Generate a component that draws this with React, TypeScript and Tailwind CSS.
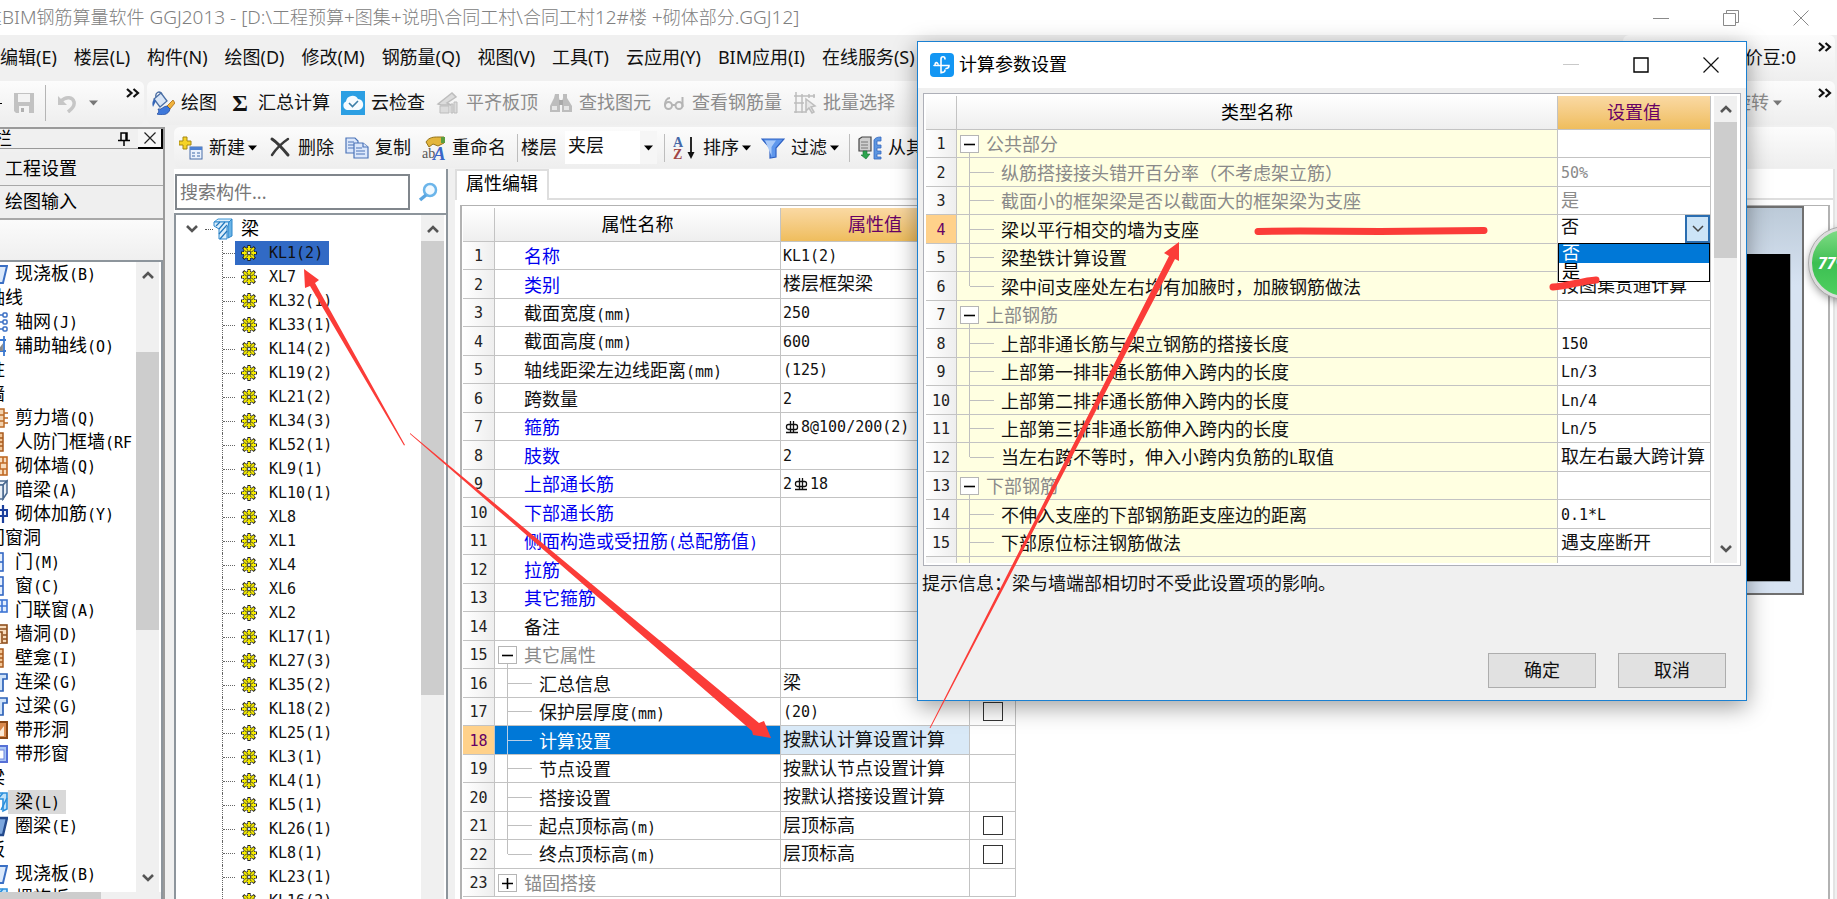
import { Fragment, type ReactNode } from "react";

/* ---------- text helpers ---------- */

const monoLatin = "font-['DejaVu_Sans_Mono',monospace] text-[15px]";

function Mix({ text, latin = monoLatin }: { text: string; latin?: string }) {
  const parts = text.split(/([\x20-\x7e]+)/);
  return (
    <>
      {parts.map((p, i) =>
        i % 2 ? (
          <span key={i} className={latin}>
            {p}
          </span>
        ) : (
          <Fragment key={i}>{p}</Fragment>
        )
      )}
    </>
  );
}

function Rebar() {
  return (
    <svg viewBox="0 0 14 16" className="mx-[2px] inline-block h-4 w-[14px] align-[-3px]" fill="none" stroke="#111" strokeWidth="1.3">
      <rect x="1.5" y="5.5" width="11" height="5" rx="2" />
      <path d="M5.5 2v12M8.5 2v12M1 13.5h12" />
    </svg>
  );
}

/* ---------- small drawings ---------- */

function Caret({ className = "text-black" }: { className?: string }) {
  return (
    <svg viewBox="0 0 9 6" className={`h-[6px] w-[9px] ${className}`} fill="currentColor">
      <path d="M0 0.5h9L4.5 5.5z" />
    </svg>
  );
}

function More() {
  return (
    <svg viewBox="0 0 14 10" className="h-[10px] w-[14px]" fill="none" stroke="#111" strokeWidth="2.2">
      <path d="M1 1l4.5 4L1 9M7.5 1L12 5 7.5 9" />
    </svg>
  );
}

function Arrow({ up = false }: { up?: boolean }) {
  return (
    <svg viewBox="0 0 12 8" className="h-2 w-3" fill="none" stroke="#555" strokeWidth="2.6">
      <path d={up ? "M1 7l5-5 5 5" : "M1 1l5 5 5-5"} />
    </svg>
  );
}

function Gear() {
  return (
    <svg viewBox="0 0 16 16" className="h-4 w-4 shrink-0">
      <path d="M8 0v16M0 8h16M2.200 2.200l11.600 11.600M13.800 2.200L2.200 13.800" stroke="#222" strokeWidth="3.200" />
      <circle cx="8" cy="8" r="6" fill="#222" />
      <path d="M8 1v14M1 8h14M3 3l10 10M13 3L3 13" stroke="#f8ee00" strokeWidth="1.900" />
      <circle cx="8" cy="8" r="5.200" fill="#f8ee00" />
      <path d="M6 4l.6 1.600M10 4l-.6 1.600M6 12l.6-1.600M10 12l-.6-1.600M4 6l1.600.6M4 10l1.600-.6M12 6l-1.600.6M12 10l-1.600-.6" stroke="#333" strokeWidth="0.900" />
      <circle cx="8" cy="8" r="1.900" fill="#d5e0ea" stroke="#222" strokeWidth="1" />
    </svg>
  );
}

function BeamIcon() {
  return (
    <svg viewBox="0 0 20 22" className="h-[22px] w-5 shrink-0">
      <path d="M1 4l4-3h14l-3 3z" fill="#dff0fc" stroke="#3a94d6" />
      <path d="M1 4h15v4l-2 1v12H6V11L1 8z" fill="#dbeefb" stroke="#2d86cb" />
      <path d="M16 4l3-3v17l-4 2V8z" fill="#69b3e6" stroke="#2d86cb" />
      <path d="M3 8l4-4M6 11l6-7M6 16l8-9M7 21l7-8" stroke="#2277bd" strokeWidth="1.200" />
    </svg>
  );
}

type Kind =
  | "slab" | "axis" | "aux" | "brick" | "brickNarrow" | "brickWide" | "box" | "rebar"
  | "door" | "window" | "hole" | "tee" | "strip" | "stripWin" | "beam" | "ring";

function KindIcon({ kind }: { kind: Kind }) {
  const draw: Record<Kind, ReactNode> = {
    slab: <path d="M5 3h16l-4 17H2z" fill="#dbe9fb" stroke="#3a6fc4" strokeWidth="2" />,
    axis: (
      <g fill="#fff" stroke="#3a6fc4" strokeWidth="1.5">
        <path d="M12 1v20M6 4h12M6 11h12M6 18h12" />
        <rect x="17" y="2" width="4" height="4" rx="1" />
        <rect x="17" y="9" width="4" height="4" rx="1" />
        <rect x="17" y="16" width="4" height="4" rx="1" />
      </g>
    ),
    aux: (
      <g fill="none" stroke="#3a78d0" strokeWidth="1.8">
        <path d="M18 1v20M8 5h12M8 16h12" />
        <path d="M13 15l3-4v4z" fill="#999" stroke="#888" />
      </g>
    ),
    brick: (
      <g fill="#f3d2ae" stroke="#bb6a26" strokeWidth="1.5">
        <rect x="4" y="2" width="14" height="18" />
        <path d="M4 8h14M4 14h14M18 6h4M18 11h4M18 16h4" />
      </g>
    ),
    brickNarrow: (
      <g fill="#f3c797" stroke="#a8591c" strokeWidth="1.5">
        <rect x="2" y="2" width="15" height="18" />
        <path d="M2 7h15M2 11h15M2 15h15M13 2v18" />
      </g>
    ),
    brickWide: (
      <g fill="#f8dcbc" stroke="#c06a25" strokeWidth="1.6">
        <rect x="2" y="2" width="19" height="18" />
        <path d="M2 8h19M2 14h19M17 2v6M14 8v6M17 14v6" />
      </g>
    ),
    box: (
      <g fill="#e8eff7" stroke="#48688f" strokeWidth="1.5">
        <path d="M4 6l6-4h11l-4 4z" />
        <path d="M17 6l4-4v12l-4 6z" />
        <path d="M4 6h13v14H4z" />
      </g>
    ),
    rebar: <path d="M17 2v18M8 7h13v6H8" fill="none" stroke="#1b3f9c" strokeWidth="2.2" />,
    door: (
      <g fill="#e6effc" stroke="#3267c4" strokeWidth="1.6">
        <rect x="3" y="2" width="14" height="18" />
        <path d="M13 11h4" />
      </g>
    ),
    window: (
      <g fill="#e2edfd" stroke="#3d74d4" strokeWidth="1.6">
        <rect x="3" y="1" width="18" height="12" />
        <path d="M16 1v12M3 7h18" />
      </g>
    ),
    hole: (
      <g fill="#f8dcbc" stroke="#8f4f1c" strokeWidth="1.6">
        <rect x="2" y="2" width="19" height="18" />
        <path d="M11 20V9h5v11M2 6h19M17 12h4M17 16h4" />
      </g>
    ),
    tee: <path d="M4 3h17v5h-4v12h-7V8H4z" fill="#cfe2f8" stroke="#2d62b8" strokeWidth="1.7" />,
    strip: (
      <g>
        <rect x="2" y="3" width="19" height="16" fill="#d98a4e" stroke="#8a4716" strokeWidth="2" />
        <path d="M10 17l8-10v10z" fill="#fbe9d6" />
      </g>
    ),
    stripWin: (
      <g>
        <rect x="2" y="3" width="19" height="16" fill="#aac6f5" stroke="#5670d6" strokeWidth="2" />
        <rect x="9" y="7" width="9" height="9" fill="#fff" stroke="#6f86e0" />
      </g>
    ),
    beam: (
      <g fill="#bfe2fa" stroke="#2c90dc" strokeWidth="1.6">
        <path d="M4 4l3-2h14v16l-4 2V8H4z" />
        <path d="M12 8l5-6M15 19l6-12" />
      </g>
    ),
    ring: <path d="M4 3h17l-4 17H5z" fill="#7ca6dd" stroke="#23498c" strokeWidth="2.4" />,
  };
  return (
    <svg viewBox="0 0 22 22" className="-ml-[14px] h-[22px] w-[22px] shrink-0">
      {draw[kind]}
    </svg>
  );
}

const toolIcon = "h-6 w-6 shrink-0";

function PaintIcon() {
  return (
    <svg viewBox="0 0 24 24" className={toolIcon}>
      <path d="M3 8l7-6 6 8-7 6z" fill="#d9e6f7" stroke="#4b6fa5" strokeWidth="1.3" />
      <path d="M5 6c-1-4 3-7 6-3" fill="none" stroke="#4b6fa5" strokeWidth="1.4" />
      <path d="M3 8c-2 3-2 5-1 8l3-6z" fill="#3465b8" />
      <path d="M22 9l2 3-5 6-3-3z" fill="#f0b23c" stroke="#a86a14" strokeWidth="0.8" />
      <path d="M7 18c4 1 5-3 9-3l3 3c-1 6-9 7-13 5 2-1 2-3 1-5z" fill="#3e78da" stroke="#274f9e" strokeWidth="0.8" />
    </svg>
  );
}
function CloudIcon() {
  return (
    <svg viewBox="0 0 24 24" className={toolIcon}>
      <rect width="24" height="24" fill="#2c9fe3" />
      <path d="M6 19a4.500 4.500 0 0 1-1-8.500A6.500 6.500 0 0 1 17 8a5.600 5.600 0 0 1 1 11z" fill="#f5fbff" />
      <path d="M8 12l3.500 3.500L17 10" fill="none" stroke="#3d7fa8" strokeWidth="1.600" />
    </svg>
  );
}
function AlignIcon() {
  return (
    <svg viewBox="0 0 24 24" className={toolIcon} stroke="#bdbdbd" fill="#dcdcdc">
      <path d="M2 13L16 2l4 4-9 6 4 2H5z" strokeWidth="1.500" />
      <path d="M4 15h9v7H4z M15 13h2v9h-2z M18 11h3v11h-3z" />
    </svg>
  );
}
function BinocularsIcon() {
  return (
    <svg viewBox="0 0 24 24" className={toolIcon} fill="#bdbdbd">
      <path d="M6 3h4v4l1 3v11H1v-6L5 7zM14 3h4v4l5 8v6H13V10l1-3z" />
      <path d="M10 9h4v5h-4z" fill="#a9a9a9" />
      <path d="M3 15h5v4H3zM15 15h5v4h-5z" fill="#e6e6e6" />
    </svg>
  );
}
function GlassesIcon() {
  return (
    <svg viewBox="0 0 24 24" className={toolIcon} fill="none" stroke="#b5b5b5" strokeWidth="2">
      <circle cx="6.500" cy="14.500" r="3.500" />
      <circle cx="17" cy="14.500" r="3.500" />
      <path d="M3 14c0-4 2-7 5-7M10 14h3.500M20.500 16V6" />
    </svg>
  );
}
function PickIcon() {
  return (
    <svg viewBox="0 0 24 24" className={toolIcon} fill="none" stroke="#bdbdbd" strokeWidth="1.500">
      <path d="M3 1v21M9 3v19M1 5h21M1 12h10M1 21h13M16 3v4M21 3v4" />
      <path d="M13 8l9 7-4 1 3 5-2 1-3-5-3 3z" fill="#e8e8e8" />
    </svg>
  );
}
function NewIcon() {
  return (
    <svg viewBox="0 0 24 24" className={toolIcon}>
      <path d="M4 1h4v4h4v4H8v4H4V9H0V5h4z" fill="#f5d327" stroke="#a58610" />
      <rect x="11" y="11" width="12" height="12" fill="#eaf1fc" stroke="#4b6ea8" />
      <path d="M11 11h12v3H11z" fill="#4f82d2" />
      <path d="M13 17h3M18 17h3M13 20h3M18 20h3" stroke="#7896c4" strokeWidth="1.500" />
    </svg>
  );
}
function DeleteIcon() {
  return (
    <svg viewBox="0 0 24 24" className={toolIcon} stroke="#3a3a3a" fill="none" strokeLinecap="round">
      <path d="M4 3c6 4 11 10 16 16" strokeWidth="3" />
      <path d="M20 3C14 7 8 13 4 19" strokeWidth="2.400" />
    </svg>
  );
}
function CopyIcon() {
  return (
    <svg viewBox="0 0 24 24" className={toolIcon} fill="#dbe7fb" stroke="#4c74b8" strokeWidth="1.200">
      <path d="M1 2h9l3 3v12H1z" />
      <path d="M3 6h6M3 9h6M3 12h6" />
      <path d="M9 7h9l5 4v11H9z" />
      <path d="M18 7v4h5" />
      <path d="M11 12h6M11 15h9M11 18h9" />
    </svg>
  );
}
function RenameIcon() {
  return (
    <svg viewBox="0 0 24 24" className={toolIcon}>
      <path d="M4 6c3-5 8-5 12-5h6v6l-6 3-5-2-4 3z" fill="#e3b53c" stroke="#94731a" />
      <path d="M19 1h4v6h-4z" fill="#5b9e3f" />
      <text x="0" y="22" fontSize="14" fill="#555" fontFamily="Liberation Serif">ab</text>
      <text x="11" y="24" fontSize="19" fontWeight="700" fontStyle="italic" fill="#3a66c8" fontFamily="Liberation Serif">A</text>
    </svg>
  );
}
function SortIcon() {
  return (
    <svg viewBox="0 0 24 24" className={toolIcon}>
      <text x="0" y="11" fontSize="14" fontWeight="700" fill="#4468a8" fontFamily="Liberation Serif">A</text>
      <text x="0" y="23" fontSize="14" fontWeight="700" fill="#a04545" fontFamily="Liberation Serif">Z</text>
      <path d="M18 1v18" stroke="#111" strokeWidth="1.800" />
      <path d="M14.500 16h7l-3.500 7z" fill="#111" />
    </svg>
  );
}
function FilterIcon() {
  return (
    <svg viewBox="0 0 24 24" className={toolIcon}>
      <path d="M1 3h22l-8 9v9l-6 1V12z" fill="#5f97ec" stroke="#2f62c4" strokeWidth="1.200" />
      <path d="M4 4.500h11L10.500 11v9z" fill="#a9caf9" />
    </svg>
  );
}
function ImportIcon() {
  return (
    <svg viewBox="0 0 24 24" className={toolIcon}>
      <path d="M1 3l3-2h9v14H1z" fill="#cfcfcf" stroke="#444" strokeWidth="1.200" />
      <path d="M3 6h7M3 9h7M3 12h7" stroke="#777" />
      <path d="M5 15h4v3h3l-4 5-5-4h2z" fill="#2da44e" stroke="#157034" strokeWidth="0.600" />
      <path d="M16 4c1-2 3-3 7-3v4h-4v4h4v3h-4v3h4v3h-4v3h4v2h-7z" fill="#5d96e0" stroke="#3468c0" strokeWidth="0.800" />
    </svg>
  );
}

/* ---------- toolbar pieces ---------- */

function Tool({ icon, label, muted = false, menu = false }: { icon: ReactNode; label: string; muted?: boolean; menu?: boolean }) {
  return (
    <button type="button" className={`flex shrink-0 items-center gap-[6px] whitespace-nowrap ${muted ? "text-[#8c8c8c]" : "text-[#111]"}`}>
      {icon}
      <span className="flex items-center gap-[3px]">
        {label}
        {menu && <Caret />}
      </span>
    </button>
  );
}

function Sep() {
  return <span className="h-7 w-px shrink-0 bg-[#bdbdbd]" />;
}

const barBg = "bg-linear-to-b from-[#fcfcfc] to-[#eeeeee]";

/* ---------- data ---------- */

const menus = ["编辑(E)", "楼层(L)", "构件(N)", "绘图(D)", "修改(M)", "钢筋量(Q)", "视图(V)", "工具(T)", "云应用(Y)", "BIM应用(I)", "在线服务(S)"];

const navRows: { label: string; kind?: Kind; on?: boolean }[] = [
  { label: "现浇板(B)", kind: "slab" },
  { label: "轴线" },
  { label: "轴网(J)", kind: "axis" },
  { label: "辅助轴线(O)", kind: "aux" },
  { label: "柱" },
  { label: "墙" },
  { label: "剪力墙(Q)", kind: "brick" },
  { label: "人防门框墙(RF", kind: "brickNarrow" },
  { label: "砌体墙(Q)", kind: "brickWide" },
  { label: "暗梁(A)", kind: "box" },
  { label: "砌体加筋(Y)", kind: "rebar" },
  { label: "门窗洞" },
  { label: "门(M)", kind: "door" },
  { label: "窗(C)", kind: "door" },
  { label: "门联窗(A)", kind: "window" },
  { label: "墙洞(D)", kind: "hole" },
  { label: "壁龛(I)", kind: "brickNarrow" },
  { label: "连梁(G)", kind: "tee" },
  { label: "过梁(G)", kind: "tee" },
  { label: "带形洞", kind: "strip" },
  { label: "带形窗", kind: "stripWin" },
  { label: "梁" },
  { label: "梁(L)", kind: "beam", on: true },
  { label: "圈梁(E)", kind: "ring" },
  { label: "板" },
  { label: "现浇板(B)", kind: "slab" },
  { label: "螺旋板(B)", kind: "beam" },
];

const beams = [
  "KL1(2)", "XL7", "KL32(1)", "KL33(1)", "KL14(2)", "KL19(2)", "KL21(2)", "KL34(3)", "KL52(1)", "KL9(1)", "KL10(1)", "XL8", "XL1", "XL4",
  "XL6", "XL2", "KL17(1)", "KL27(3)", "KL35(2)", "KL18(2)", "KL25(1)", "KL3(1)", "KL4(1)", "KL5(1)", "KL26(1)", "KL8(1)", "KL23(1)", "KL16(2)",
];

type Level = "plain" | "open" | "closed" | "child" | "last";
interface Row {
  name: string;
  value?: ReactNode;
  level: Level;
  blue?: boolean;
  grey?: boolean;
  check?: boolean;
  on?: boolean;
}

const t = (s: string) => <Mix text={s} />;

const props: Row[] = [
  { name: "名称", value: t("KL1(2)"), level: "plain", blue: true },
  { name: "类别", value: t("楼层框架梁"), level: "plain", blue: true },
  { name: "截面宽度(mm)", value: t("250"), level: "plain" },
  { name: "截面高度(mm)", value: t("600"), level: "plain" },
  { name: "轴线距梁左边线距离(mm)", value: t("(125)"), level: "plain" },
  { name: "跨数量", value: t("2"), level: "plain" },
  { name: "箍筋", value: <><Rebar />{t("8@100/200(2)")}</>, level: "plain", blue: true },
  { name: "肢数", value: t("2"), level: "plain", blue: true },
  { name: "上部通长筋", value: <>{t("2")}<Rebar />{t("18")}</>, level: "plain", blue: true },
  { name: "下部通长筋", level: "plain", blue: true },
  { name: "侧面构造或受扭筋(总配筋值)", level: "plain", blue: true },
  { name: "拉筋", level: "plain", blue: true },
  { name: "其它箍筋", level: "plain", blue: true },
  { name: "备注", level: "plain" },
  { name: "其它属性", level: "open" },
  { name: "汇总信息", value: t("梁"), level: "child" },
  { name: "保护层厚度(mm)", value: t("(20)"), level: "child", check: true },
  { name: "计算设置", value: t("按默认计算设置计算"), level: "child", on: true },
  { name: "节点设置", value: t("按默认节点设置计算"), level: "child" },
  { name: "搭接设置", value: t("按默认搭接设置计算"), level: "child" },
  { name: "起点顶标高(m)", value: t("层顶标高"), level: "child", check: true },
  { name: "终点顶标高(m)", value: t("层顶标高"), level: "last", check: true },
  { name: "锚固搭接", level: "closed" },
];

const params: Row[] = [
  { name: "公共部分", level: "open" },
  { name: "纵筋搭接接头错开百分率（不考虑架立筋）", value: t("50%"), level: "child", grey: true },
  { name: "截面小的框架梁是否以截面大的框架梁为支座", value: t("是"), level: "child", grey: true },
  { name: "梁以平行相交的墙为支座", value: <SupportSelect />, level: "child", on: true },
  { name: "梁垫铁计算设置", level: "child" },
  { name: "梁中间支座处左右均有加腋时，加腋钢筋做法", value: t("按图集贯通计算"), level: "last" },
  { name: "上部钢筋", level: "open" },
  { name: "上部非通长筋与架立钢筋的搭接长度", value: t("150"), level: "child" },
  { name: "上部第一排非通长筋伸入跨内的长度", value: t("Ln/3"), level: "child" },
  { name: "上部第二排非通长筋伸入跨内的长度", value: t("Ln/4"), level: "child" },
  { name: "上部第三排非通长筋伸入跨内的长度", value: t("Ln/5"), level: "child" },
  { name: "当左右跨不等时，伸入小跨内负筋的L取值", value: t("取左右最大跨计算"), level: "last" },
  { name: "下部钢筋", level: "open" },
  { name: "不伸入支座的下部钢筋距支座边的距离", value: t("0.1*L"), level: "child" },
  { name: "下部原位标注钢筋做法", value: t("遇支座断开"), level: "child" },
];

/* ---------- grid pieces ---------- */

function SupportSelect() {
  return (
    <div className="relative flex h-full w-full items-center">
      <select aria-label="梁以平行相交的墙为支座" defaultValue="否" className="h-full w-full appearance-none bg-white pb-[6px] pl-[3px] outline-none">
        <option>否</option>
        <option>是</option>
      </select>
      <span className="pointer-events-none absolute top-0 right-0 flex h-full w-[25px] items-center justify-center border-2 border-[#2a6db0] bg-[#cce4f7]">
        <svg viewBox="0 0 12 8" className="h-2 w-3" fill="none" stroke="#444" strokeWidth="1.500">
          <path d="M1 1l5 5 5-5" />
        </svg>
      </span>
      <ul role="listbox" aria-label="设置值" className="absolute top-full left-0 z-10 w-full border border-black bg-white leading-[19px]">
        <li role="option" aria-selected="true" className="h-[19px] overflow-hidden bg-[#0078d7] pl-[3px] text-white">否</li>
        <li role="option" aria-selected="false" className="h-[18px] overflow-hidden pl-[3px] text-black">是</li>
      </ul>
    </div>
  );
}

const rowH = "group-odd:h-[27px] group-even:h-[28px]";

function NameCell({ row }: { row: Row }) {
  const line = row.on && row.name === "计算设置" ? "bg-[#b9cfe6]" : "bg-[#bfbfbf]";
  const tone =
    line === "bg-[#b9cfe6]" ? "text-white" : row.blue ? "text-[#0000f0]" : row.grey || row.level === "open" || row.level === "closed" ? "text-[#8a8a8a]" : "text-[#111]";
  return (
    <div className={`flex items-center overflow-hidden whitespace-nowrap ${rowH} ${tone}`}>
      {row.level === "plain" && <span className="w-[29px] shrink-0" />}
      {(row.level === "open" || row.level === "closed") && (
        <span className="mr-[7px] ml-[3px] flex h-full w-[19px] shrink-0 flex-col items-center pt-[5px]">
          <button type="button" aria-label={row.name} className="flex h-[18px] w-[19px] shrink-0 items-center justify-center border border-[#b5b5b5] bg-white">
            <svg viewBox="0 0 11 11" className="h-[11px] w-[11px]" stroke="#000" strokeWidth="1.600">
              <path d={row.level === "open" ? "M0 5.500h11" : "M0 5.500h11M5.500 0v11"} />
            </svg>
          </button>
          {row.level === "open" && <span className={`w-px flex-1 ${line}`} />}
        </span>
      )}
      {(row.level === "child" || row.level === "last") && (
        <span className="mr-[7px] ml-[12px] flex h-full w-[25px] shrink-0">
          <span className={`w-px ${row.level === "last" ? "h-1/2" : "h-full"} ${line}`} />
          <span className={`h-px flex-1 self-center ${line}`} />
        </span>
      )}
      <span className="pt-[3px]">
        <Mix text={row.name} />
      </span>
    </div>
  );
}

const line = "border-[#c3c3c3]";

function NumCell({ n, on }: { n: number; on?: boolean }) {
  return (
    <th scope="row" className={`border-r border-b p-0 text-center font-normal ${line} ${on ? "bg-[#ffd18a] text-[#660066]" : "bg-linear-to-r from-white to-[#eeeeee] text-[#222]"}`}>
      <Mix text={String(n)} />
    </th>
  );
}

const headCell = `h-[34px] border-r border-b p-0 text-center font-normal ${line}`;
const greyHead = "bg-linear-to-b from-white to-[#eeeeee] text-black";
const goldHead = "bg-linear-to-b from-[#fad9a3] to-[#efbd5c] text-[#660066]";

function PropertyGrid() {
  return (
    <table className="mt-[2px] w-[553px] shrink-0 table-fixed border-separate border-spacing-0 self-start">
      <colgroup>
        <col className="w-[32px]" />
        <col className="w-[286px]" />
        <col className="w-[189px]" />
        <col className="w-[46px]" />
      </colgroup>
      <thead>
        <tr>
          <th className={`${headCell} ${greyHead}`} />
          <th className={`${headCell} ${greyHead}`}>属性名称</th>
          <th className={`${headCell} ${goldHead}`}>属性值</th>
          <th className={`${headCell} ${greyHead}`}>附加</th>
        </tr>
      </thead>
      <tbody>
        {props.map((r, i) => (
          <tr key={r.name} className="group">
            <NumCell n={i + 1} on={r.on} />
            <td className={`border-r border-b p-0 ${line} ${r.on ? "bg-[#0078d7]" : ""}`}>
              <NameCell row={r} />
            </td>
            <td className={`border-r border-b py-0 pr-0 pl-[2px] whitespace-nowrap text-[#111] ${line} ${r.on ? "bg-[#d9e9f7]" : ""}`}>{r.value}</td>
            <td className={`border-r border-b p-0 ${line}`}>
              {r.check && (
                <span className="flex justify-center">
                  <input type="checkbox" aria-label={r.name} className="h-[19px] w-5 appearance-none border border-[#333] bg-white" />
                </span>
              )}
            </td>
          </tr>
        ))}
      </tbody>
    </table>
  );
}

function ParamGrid() {
  return (
    <table className="min-w-0 flex-1 table-fixed border-separate border-spacing-0">
      <colgroup>
        <col className="w-[31px]" />
        <col />
        <col className="w-[153px]" />
      </colgroup>
      <thead>
        <tr>
          <th className={`${headCell} ${greyHead}`} />
          <th className={`${headCell} ${greyHead}`}>类型名称</th>
          <th className={`${headCell} ${goldHead}`}>设置值</th>
        </tr>
      </thead>
      <tbody>
        {params.map((r, i) => (
          <tr key={r.name} className="group">
            <NumCell n={i + 1} on={r.on} />
            <td className={`border-r border-b bg-[#ffffe1] p-0 ${line}`}>
              <NameCell row={r} />
            </td>
            <td className={`border-r border-b p-0 ${line}`}>
              <div className={`flex items-center whitespace-nowrap ${rowH} ${r.grey ? "text-[#8a8a8a]" : "text-[#111]"}`}>
                {r.on ? r.value : <span className="pl-[3px]">{r.value}</span>}
              </div>
            </td>
          </tr>
        ))}
        <tr>
          <th className={`h-[6px] border-r bg-[#f6f6f6] p-0 ${line}`} />
          <td className={`border-r bg-[#ffffe1] p-0 ${line}`}>
            <span className="ml-[12px] block h-[6px] w-px bg-[#bfbfbf]" />
          </td>
          <td className={`border-r p-0 ${line}`} />
        </tr>
      </tbody>
    </table>
  );
}

/* ---------- panels ---------- */

function TitleBar() {
  return (
    <header className="flex h-[35px] shrink-0 items-center bg-white font-['Noto_Sans','Noto_Sans_CJK_SC',sans-serif] text-[#808080]">
      <h1 className="-ml-[16px] flex-1 overflow-hidden pb-px font-light whitespace-nowrap">
        <Mix text={"达BIM钢筋算量软件 GGJ2013 - [D:\\工程预算+图集+说明\\合同工村\\合同工村12#楼 +砌体部分.GGJ12]"} latin="text-[19px]" />
      </h1>
      <div className="flex gap-[54px] pr-7">
        <button type="button" aria-label="最小化">
          <svg viewBox="0 0 16 16" className="h-4 w-4" stroke="#8a8a8a"><path d="M0 8.500h16" /></svg>
        </button>
        <button type="button" aria-label="还原">
          <svg viewBox="0 0 16 16" className="h-4 w-4" stroke="#8a8a8a" fill="none"><path d="M.5 3.500h12v12H.5zM3.500 3V.5h12v12H13" /></svg>
        </button>
        <button type="button" aria-label="关闭">
          <svg viewBox="0 0 16 16" className="h-4 w-4" stroke="#8a8a8a"><path d="M.5.5l15 15M15.500.5l-15 15" /></svg>
        </button>
      </div>
    </header>
  );
}

function MenuBar() {
  return (
    <nav className="flex h-[46px] shrink-0 items-center justify-between bg-[#f0f0f0] pr-[2px] font-['Noto_Sans','Noto_Sans_CJK_SC',sans-serif] text-[#111]">
      <div className="flex gap-[17px] pb-[3px]">
        {menus.map((m) => (
          <button key={m} type="button" className="whitespace-nowrap">{m}</button>
        ))}
      </div>
      <div className={`flex h-full w-[212px] items-center justify-end gap-[22px] rounded-md pr-[3px] ${barBg}`}>
        <span className="pb-[3px] whitespace-nowrap">造价豆:0</span>
        <button type="button" aria-label="更多" className="self-start pt-[7px]"><More /></button>
      </div>
    </nav>
  );
}

function MainToolbar() {
  return (
    <div className="flex h-[46px] shrink-0 gap-[3px] bg-[#f0f0f0] pr-[2px]">
      <div className={`flex h-11 w-[144px] shrink-0 items-center rounded-r-md pr-1 ${barBg}`}>
        <span className="h-px w-[2px] bg-black" />
        <button type="button" aria-label="保存" className="ml-[11px]">
          <svg viewBox="0 0 22 22" className="h-[22px] w-[22px]"><path d="M1 1h20v20H3l-2-2z" fill="#c2c2c2" /><path d="M5 2h12v8H5zM6 14h10v7H6z" fill="#f3f3f3" /><path d="M8 16h3v4H8z" fill="#b0b0b0" /></svg>
        </button>
        <span className="ml-[10px] h-9 w-px bg-[#b5b5b5]" />
        <button type="button" aria-label="撤销" className="ml-[11px] flex items-center gap-[12px]">
          <svg viewBox="0 0 20 20" className="h-5 w-5" fill="none" stroke="#c6c6c6"><path d="M4 8c5-5 12-4 13 1 1 4-2 7-6 10" strokeWidth="3.500" /><path d="M1 3v9h9z" fill="#c6c6c6" stroke="none" /></svg>
          <Caret className="text-[#777]" />
        </button>
        <button type="button" aria-label="更多" className="ml-auto self-start pt-[7px]"><More /></button>
      </div>
      <div className={`flex h-11 min-w-0 flex-1 items-center gap-[11px] rounded-md pl-1 ${barBg}`}>
        <Tool icon={<PaintIcon />} label="绘图" />
        <Tool icon={<span className="w-6 text-center font-['Liberation_Serif',serif] text-[24px] leading-6 font-bold">Σ</span>} label="汇总计算" />
        <Tool icon={<CloudIcon />} label="云检查" />
        <Tool icon={<AlignIcon />} label="平齐板顶" muted />
        <Tool icon={<BinocularsIcon />} label="查找图元" muted />
        <Tool icon={<GlassesIcon />} label="查看钢筋量" muted />
        <Tool icon={<PickIcon />} label="批量选择" muted />
        <button type="button" className="ml-auto flex items-center gap-1 text-[#8c8c8c]">
          旋转
          <Caret className="text-[#777]" />
        </button>
        <button type="button" aria-label="更多" className="ml-[25px] self-start pt-[7px] pr-[3px]"><More /></button>
      </div>
    </div>
  );
}

function Sidebar() {
  const section = "flex h-[34px] w-full items-center border-b border-[#a8a8a8] bg-[#efefef] pl-[5px] text-left text-black";
  return (
    <aside className="flex w-[165px] shrink-0 flex-col overflow-hidden border-t-2 border-r-2 border-[#9a9a9a] bg-[#f0f0f0]">
      <div className="flex h-5 shrink-0 items-center border-b border-[#999] leading-5">
        <span className="-ml-[6px] text-black">栏</span>
        <button type="button" aria-label="固定" className="ml-auto pr-2">
          <svg viewBox="0 0 12 14" className="h-[14px] w-3" fill="none" stroke="#000" strokeWidth="1.500"><path d="M3 8V1h6v7M8 1v7M0 8.500h12M6 9v5" /></svg>
        </button>
        <button type="button" aria-label="关闭" className="flex h-5 w-[25px] items-center justify-center border-r-2 border-b-2 border-black bg-[#f6f6f6]">
          <svg viewBox="0 0 12 12" className="h-3 w-3" stroke="#222" strokeWidth="1.200"><path d="M.5.5l11 11M11.500.5l-11 11" /></svg>
        </button>
      </div>
      <div className="shrink-0 pt-[3px]">
        <button type="button" className={section}>工程设置</button>
        <button type="button" className={`${section} border-b-2`}>绘图输入</button>
      </div>
      <div className="h-10 shrink-0 bg-linear-to-b from-[#fbfbfb] to-[#efefef]" />
      <div className="flex min-h-0 flex-1 flex-col border-t-2 border-r-2 border-[#8d959c] bg-white">
        <div className="flex min-h-0 flex-1">
          <ul className="min-w-0 flex-1 overflow-hidden">
            {navRows.map((r, i) => (
              <li key={i} className="flex h-6 items-center whitespace-nowrap text-black">
                {r.kind ? (
                  <a href="#nav" className="flex h-6 items-center">
                    <KindIcon kind={r.kind} />
                    <span className={`h-6 pr-[6px] pl-[7px] leading-6 ${r.on ? "bg-[#d9d9d9]" : ""}`}>
                      <Mix text={r.label} />
                    </span>
                  </a>
                ) : (
                  <span className="-ml-[13px]">{r.label}</span>
                )}
              </li>
            ))}
          </ul>
          <div className="flex w-[23px] flex-col items-center bg-[#f0f0f0]">
            <span className="flex h-[90px] items-start pt-[9px]"><Arrow up /></span>
            <span className="h-[278px] w-full bg-[#cdcdcd]" />
            <span className="mt-auto pb-[10px]"><Arrow /></span>
          </div>
          <span className="w-[2px] bg-white" />
        </div>
        <div className="flex h-[7px] shrink-0 bg-[#f0f0f0]">
          <span className="w-[101px] bg-[#cdcdcd]" />
        </div>
      </div>
    </aside>
  );
}

function BeamTree() {
  return (
    <section className="flex w-[274px] shrink-0 flex-col overflow-hidden border-r-2 border-[#8d959c] bg-white">
      <div className="flex h-11 shrink-0 items-center pt-[2px] pl-px">
        <input type="text" aria-label="搜索构件" placeholder="搜索构件..." className="h-[36px] w-[235px] border-2 border-[#80868c] bg-white pb-px pl-[3px] font-['Noto_Sans','Noto_Sans_CJK_SC',sans-serif] outline-none placeholder:text-[#777]" />
        <button type="button" aria-label="搜索" className="flex flex-1 justify-center">
          <svg viewBox="0 0 20 20" className="h-5 w-5" fill="none" stroke="#6bb5ea"><circle cx="12" cy="8" r="6" strokeWidth="2.500" fill="#f1f9ff" /><path d="M8 13l-6 5" strokeWidth="3.500" stroke="#5aa5e0" /></svg>
        </button>
      </div>
      <div className="flex min-h-0 flex-1 border-t-2 border-l-2 border-[#8d959c]">
        <div className="min-w-0 flex-1 overflow-hidden pt-[2px]">
          <div className="flex h-6 items-center pl-[10px]">
            <Arrow />
            <span className="ml-[7px] w-2 border-t border-dotted border-[#555]" />
            <BeamIcon />
            <span className="ml-[8px] text-black">梁</span>
          </div>
          <ul>
            {beams.map((b, i) => (
              <li key={b} className="ml-[46px] flex h-6 items-center border-l border-dotted border-[#666]">
                <span className="w-3 shrink-0 border-t border-dotted border-[#666]" />
                <button type="button" className={`flex h-6 items-center gap-3 pr-[6px] pl-[6px] ${i === 0 ? "bg-[#316ac5]" : ""} text-[#111]`}>
                  <Gear />
                  <Mix text={b} />
                </button>
              </li>
            ))}
          </ul>
        </div>
        <div className="flex w-[23px] flex-col items-center bg-[#f0f0f0]">
          <span className="flex h-[26px] shrink-0 items-center pt-[2px]"><Arrow up /></span>
          <span className="h-[454px] w-full shrink-0 bg-[#cdcdcd]" />
        </div>
        <span className="w-[2px] bg-white" />
      </div>
    </section>
  );
}

function ComponentToolbar() {
  return (
    <div className={`flex h-[41px] shrink-0 items-center gap-[11px] overflow-hidden rounded-md pl-[5px] ${barBg}`}>
      <Tool icon={<NewIcon />} label="新建" menu />
      <Tool icon={<DeleteIcon />} label="删除" />
      <Tool icon={<CopyIcon />} label="复制" />
      <Tool icon={<RenameIcon />} label="重命名" />
      <div className="flex shrink-0 items-center gap-[3px]">
        <Sep />
        <label htmlFor="floor" className="text-[#111]">楼层</label>
        <span className="relative ml-[5px] flex h-[33px] w-[92px]">
          <select id="floor" className="h-full w-full appearance-none bg-white pb-1 pl-[3px] text-[#111] outline-none">
            <option>夹层</option>
          </select>
          <span className="pointer-events-none absolute top-0 right-0 flex h-full w-[17px] items-center justify-center bg-[#f6f6f6]"><Caret /></span>
        </span>
        <span className="ml-1"><span className="block h-7 w-px bg-[#bdbdbd]" /></span>
      </div>
      <div className="-ml-[3px] flex shrink-0 items-center gap-[10px]">
        <Tool icon={<SortIcon />} label="排序" menu />
        <Tool icon={<FilterIcon />} label="过滤" menu />
        <Sep />
      </div>
      <div className="-ml-[3px] flex">
        <Tool icon={<ImportIcon />} label="从其" />
      </div>
    </div>
  );
}

function Workspace() {
  return (
    <section className="flex min-w-0 flex-1 flex-col border-r-2 border-[#e3e3e3] bg-white">
      <div className="flex h-[31px] shrink-0">
        <div role="tablist" className="flex">
          <button type="button" role="tab" aria-selected="true" className="w-[94px] border-t-2 border-r-2 border-l-2 border-[#dedede] bg-white pb-1 text-black">属性编辑</button>
        </div>
        <div className="flex-1 border-b-2 border-[#dedede]" />
      </div>
      <div className="mt-[5px] mr-[3px] ml-[5px] flex min-h-0 flex-1 overflow-hidden border-t border-r-2 border-l-2 border-[#b2b2b2] pl-px">
        <PropertyGrid />
        <div className="mr-6 ml-auto h-[389px] w-[600px] border-2 border-[#707070] bg-linear-to-b from-[#bccad8] to-[#d7e3f2] to-20% pt-[46px] pr-[11px] pb-[11px] pl-[11px]">
          <div className="h-full border-r border-b border-[#9aa4ae] bg-black" />
        </div>
      </div>
    </section>
  );
}

function ParamDialog() {
  return (
    <div role="dialog" aria-label="计算参数设置" className="absolute top-[41px] left-[917px] flex h-[660px] w-[830px] flex-col border border-[#1a80d2] bg-[#f0f0f0] shadow-[0_6px_22px_rgba(0,0,0,0.38)]">
      <div className="flex h-[46px] shrink-0 items-center bg-white pl-3 text-black">
        <svg viewBox="0 0 24 24" className="h-6 w-6">
          <rect width="24" height="24" rx="4" fill="#1296f3" />
          <path d="M11 20V6c0-3 4-3 4 0M5 12c0-3 2-3 3-1M4 12.500h15c0 2-1 3-3 3M11 19c2 1 4 0 4-2" fill="none" stroke="#fff" strokeWidth="1.600" strokeLinecap="round" />
        </svg>
        <h2 className="ml-[5px] flex-1">计算参数设置</h2>
        <div className="flex gap-[54px] pr-[27px]">
          <button type="button" aria-label="最小化"><svg viewBox="0 0 16 16" className="h-4 w-4" stroke="#c9c9c9"><path d="M0 7.500h16" /></svg></button>
          <button type="button" aria-label="最大化"><svg viewBox="0 0 16 16" className="h-4 w-4" stroke="#000" fill="none" strokeWidth="1.400"><path d="M1 1h14v14H1z" /></svg></button>
          <button type="button" aria-label="关闭"><svg viewBox="0 0 16 16" className="h-4 w-4" stroke="#111" strokeWidth="1.200"><path d="M.5.5l15 15M15.500.5l-15 15" /></svg></button>
        </div>
      </div>
      <div className="mx-[5px] mt-[5px] flex border border-[#aeb0b8] bg-white p-[2px]">
        <ParamGrid />
        <div className="ml-[3px] flex w-[23px] flex-col items-center bg-[#f0f0f0]">
          <span className="flex h-[26px] items-center"><Arrow up /></span>
          <span className="h-[136px] w-full bg-[#cdcdcd]" />
          <span className="mt-auto pb-[10px]"><Arrow /></span>
        </div>
        <span className="w-px bg-white" />
      </div>
      <p className="mt-[5px] ml-1 leading-[26px] text-[#111]">提示信息：梁与墙端部相切时不受此设置项的影响。</p>
      <div className="mt-auto mr-5 mb-3 flex justify-end gap-[22px]">
        <button type="button" className="h-[35px] w-[108px] border border-[#adadad] bg-[#e1e1e1] text-[#111]">确定</button>
        <button type="button" className="h-[35px] w-[108px] border border-[#adadad] bg-[#e1e1e1] text-[#111]">取消</button>
      </div>
    </div>
  );
}

function FloatingMeter() {
  return (
    <div className="absolute top-[227px] -right-[44px] flex h-[72px] w-[72px] items-center rounded-full border-[3px] border-[#dcdcdc] bg-linear-to-b from-[#7fdc86] via-[#3cbf52] to-[#4fd060] pl-[6px] shadow-[0_3px_8px_rgba(0,0,0,0.4)] outline-1 outline-[#aaa]">
      <span className="flex h-full items-center font-['Open_Sans',sans-serif] text-[16px] font-bold text-white italic">77%</span>
    </div>
  );
}

function Markup() {
  return (
    <svg viewBox="0 0 1837 899" className="pointer-events-none absolute top-0 left-0 z-20 h-[899px] w-[1837px]" fill="#fb3c38">
      <path d="M304 269L319 280 315 283 405 445 404 445.500 310 286 305 288z" />
      <path d="M410 433L759 723 764 721 771 738 753 735 752 731 410 434z" />
      <path d="M929.500 728L1169 256 1164 253 1179 242 1179 261 1175 259 930.500 728z" />
      <path d="M1258 231.500L1300 231 1380 231.500 1484 230.500M1553 287C1568 286 1582 281 1596 280" fill="none" stroke="#fb3c38" strokeWidth="7" strokeLinecap="round" />
    </svg>
  );
}

export default function App() {
  return (
    <div className="relative flex h-screen flex-col overflow-hidden bg-[#f0f0f0] font-['Liberation_Sans','Noto_Sans_CJK_SC',sans-serif] text-[18px] leading-6">
      <TitleBar />
      <MenuBar />
      <MainToolbar />
      <div className="flex min-h-0 flex-1">
        <Sidebar />
        <div className="ml-[9px] flex min-w-0 flex-1 flex-col pr-[2px]">
          <ComponentToolbar />
          <div className="mt-px flex min-h-0 flex-1 gap-[7px]">
            <BeamTree />
            <Workspace />
          </div>
        </div>
      </div>
      <ParamDialog />
      <FloatingMeter />
      <Markup />
    </div>
  );
}
